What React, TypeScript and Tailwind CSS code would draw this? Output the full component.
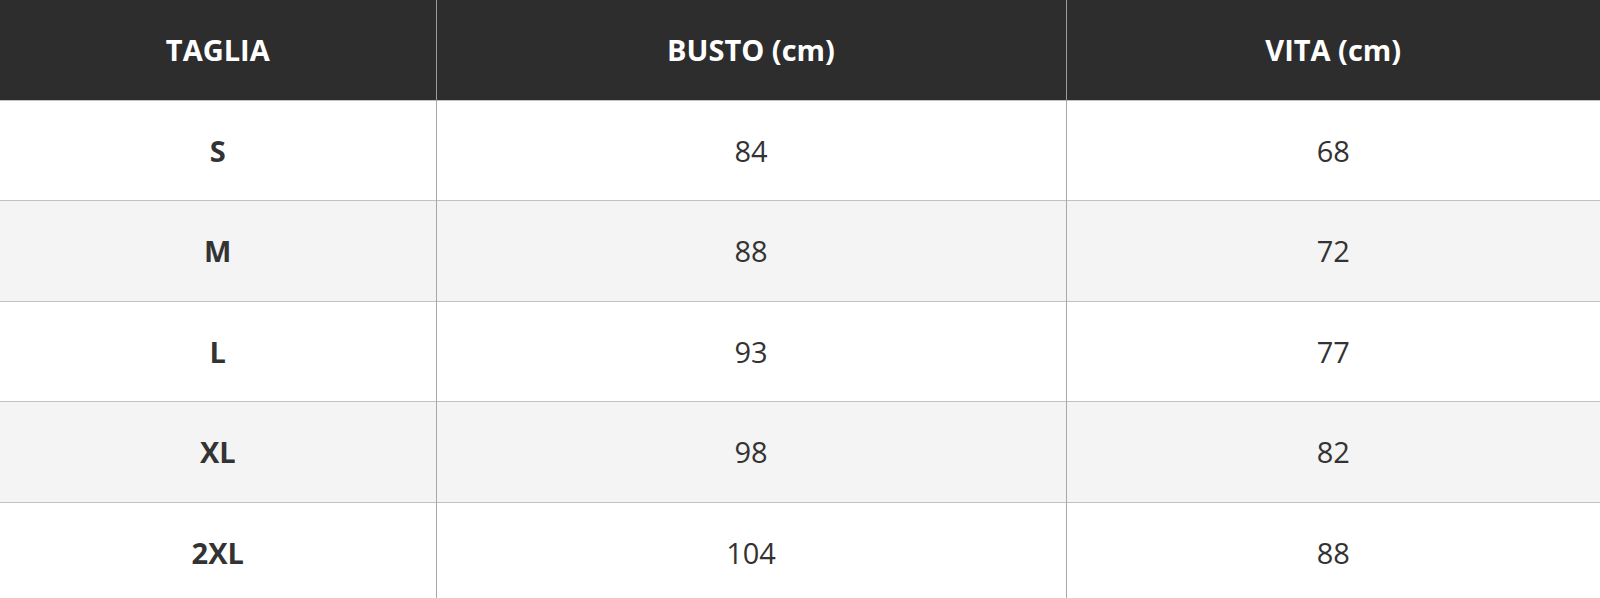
import React from "react";

const rows = [
  ["S", "84", "68"],
  ["M", "88", "72"],
  ["L", "93", "77"],
  ["XL", "98", "82"],
  ["2XL", "104", "88"],
];

export default function App() {
  return (
    <div className="w-[1600px] h-[598px] overflow-hidden bg-white" style={{ fontFamily: '"Open Sans", "Noto Sans", sans-serif' }}>
      <table className="w-[1600px] border-collapse table-fixed">
        <colgroup>
          <col className="w-[436px]" />
          <col className="w-[630px]" />
          <col className="w-[534px]" />
        </colgroup>
        <thead>
          <tr className="h-[100px] bg-[#2d2d2d] text-white">
            <th className="text-[29px] font-bold border-r border-[#9a9a9a] p-0">TAGLIA</th>
            <th className="text-[29px] font-bold border-r border-[#9a9a9a] p-0">BUSTO (cm)</th>
            <th className="text-[29px] font-bold p-0">VITA (cm)</th>
          </tr>
        </thead>
        <tbody>
          {rows.map((r, i) => (
            <tr key={i} className={`h-[100.6px] border-t-[1.5px] border-[#c2c2c2] ${i % 2 === 1 ? "bg-[#f4f4f4]" : "bg-white"}`}>
              <td className="text-center text-[29px] font-bold text-[#333333] border-r border-[#a8a8a8] p-0">{r[0]}</td>
              <td className="text-center text-[29px] font-medium text-[#333333] border-r border-[#a8a8a8] p-0">{r[1]}</td>
              <td className="text-center text-[29px] font-medium text-[#333333] p-0">{r[2]}</td>
            </tr>
          ))}
        </tbody>
      </table>
    </div>
  );
}
